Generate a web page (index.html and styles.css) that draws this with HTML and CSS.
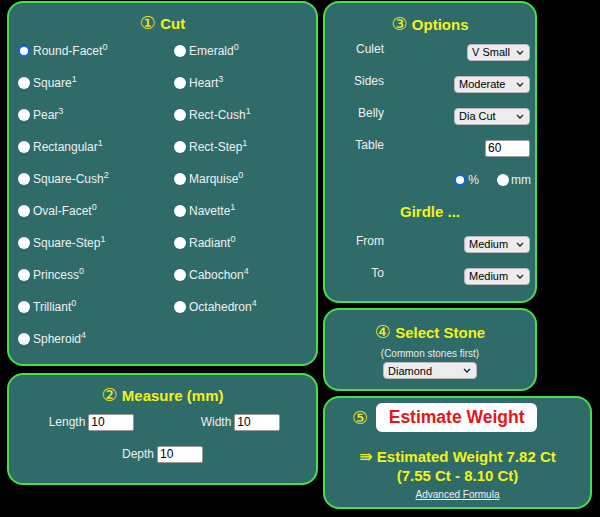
FILE: index.html
```html
<!DOCTYPE html>
<html>
<head>
<meta charset="utf-8">
<link rel="stylesheet" href="styles.css">
</head>
<body>
<div class="page">
  <div class="col-left">
    <div class="panel cut">
      <div class="title"><span class="num">①</span> Cut</div>
      <div class="cut-grid">
        <label class="opt"><input type="radio" name="cut" checked><span>Round-Facet<sup>0</sup></span></label>
        <label class="opt"><input type="radio" name="cut"><span>Emerald<sup>0</sup></span></label>
        <label class="opt"><input type="radio" name="cut"><span>Square<sup>1</sup></span></label>
        <label class="opt"><input type="radio" name="cut"><span>Heart<sup>3</sup></span></label>
        <label class="opt"><input type="radio" name="cut"><span>Pear<sup>3</sup></span></label>
        <label class="opt"><input type="radio" name="cut"><span>Rect-Cush<sup>1</sup></span></label>
        <label class="opt"><input type="radio" name="cut"><span>Rectangular<sup>1</sup></span></label>
        <label class="opt"><input type="radio" name="cut"><span>Rect-Step<sup>1</sup></span></label>
        <label class="opt"><input type="radio" name="cut"><span>Square-Cush<sup>2</sup></span></label>
        <label class="opt"><input type="radio" name="cut"><span>Marquise<sup>0</sup></span></label>
        <label class="opt"><input type="radio" name="cut"><span>Oval-Facet<sup>0</sup></span></label>
        <label class="opt"><input type="radio" name="cut"><span>Navette<sup>1</sup></span></label>
        <label class="opt"><input type="radio" name="cut"><span>Square-Step<sup>1</sup></span></label>
        <label class="opt"><input type="radio" name="cut"><span>Radiant<sup>0</sup></span></label>
        <label class="opt"><input type="radio" name="cut"><span>Princess<sup>0</sup></span></label>
        <label class="opt"><input type="radio" name="cut"><span>Cabochon<sup>4</sup></span></label>
        <label class="opt"><input type="radio" name="cut"><span>Trilliant<sup>0</sup></span></label>
        <label class="opt"><input type="radio" name="cut"><span>Octahedron<sup>4</sup></span></label>
        <label class="opt"><input type="radio" name="cut"><span>Spheroid<sup>4</sup></span></label>
      </div>
    </div>
    <div class="panel measure">
      <div class="title"><span class="num">②</span> Measure (mm)</div>
      <div class="m-row two">
        <div class="field"><span class="lbl">Length</span><input class="num-in" type="text" value="10"></div>
        <div class="field"><span class="lbl">Width</span><input class="num-in" type="text" value="10"></div>
      </div>
      <div class="m-row one">
        <div class="field"><span class="lbl">Depth</span><input class="num-in" type="text" value="10"></div>
      </div>
    </div>
  </div>
  <div class="col-right">
    <div class="panel options">
      <div class="title"><span class="num">③</span> Options</div>
      <div class="o-row">
        <span class="o-lbl">Culet</span>
        <span class="sel w63"><select><option>V Small</option></select><svg width="8" height="5" viewBox="0 0 8 5"><polyline points="1,1 4,4 7,1" fill="none" stroke="#222" stroke-width="1.3"/></svg></span>
      </div>
      <div class="o-row">
        <span class="o-lbl">Sides</span>
        <span class="sel w76"><select><option>Moderate</option></select><svg width="8" height="5" viewBox="0 0 8 5"><polyline points="1,1 4,4 7,1" fill="none" stroke="#222" stroke-width="1.3"/></svg></span>
      </div>
      <div class="o-row">
        <span class="o-lbl">Belly</span>
        <span class="sel w76"><select><option>Dia Cut</option></select><svg width="8" height="5" viewBox="0 0 8 5"><polyline points="1,1 4,4 7,1" fill="none" stroke="#222" stroke-width="1.3"/></svg></span>
      </div>
      <div class="o-row">
        <span class="o-lbl">Table</span>
        <input class="num-in table-in" type="text" value="60">
      </div>
      <div class="o-row units">
        <label class="opt"><input type="radio" name="unit" checked><span>%</span></label>
        <label class="opt"><input type="radio" name="unit"><span>mm</span></label>
      </div>
      <div class="subtitle">Girdle ...</div>
      <div class="o-row">
        <span class="o-lbl">From</span>
        <span class="sel w66"><select><option>Medium</option></select><svg width="8" height="5" viewBox="0 0 8 5"><polyline points="1,1 4,4 7,1" fill="none" stroke="#222" stroke-width="1.3"/></svg></span>
      </div>
      <div class="o-row">
        <span class="o-lbl">To</span>
        <span class="sel w66"><select><option>Medium</option></select><svg width="8" height="5" viewBox="0 0 8 5"><polyline points="1,1 4,4 7,1" fill="none" stroke="#222" stroke-width="1.3"/></svg></span>
      </div>
    </div>
    <div class="panel stone">
      <div class="title"><span class="num">④</span> Select Stone</div>
      <div class="hint">(Common stones first)</div>
      <span class="sel w94"><select><option>Diamond</option></select><svg width="8" height="5" viewBox="0 0 8 5"><polyline points="1,1 4,4 7,1" fill="none" stroke="#222" stroke-width="1.3"/></svg></span>
    </div>
    <div class="panel estimate">
      <div class="est-head">
        <span class="num big">⑤</span>
        <button class="est-btn" type="button">Estimate Weight</button>
      </div>
      <div class="result"><span class="arrow">⇛</span> Estimated Weight 7.82 Ct</div>
      <div class="result">(7.55 Ct - 8.10 Ct)</div>
      <a class="adv" href="#">Advanced Formula</a>
    </div>
  </div>
</div>
</body>
</html>
```
FILE: styles.css
```css
html, body {
  margin: 0;
  padding: 0;
  background: #000;
}
body {
  font-family: "Liberation Sans", Arial, sans-serif;
  color: #f0f0f0;
  font-size: 12px;
}
.page {
  display: flex;
  align-items: flex-start;
  gap: 5px;
  padding: 1px 0 0 7px;
}
.col-left {
  display: flex;
  flex-direction: column;
  gap: 7px;
  width: 311px;
}
.col-right {
  display: flex;
  flex-direction: column;
  align-items: flex-start;
  gap: 5px;
}
.panel {
  box-sizing: border-box;
  border: 2px solid #4cdc50;
  border-radius: 16px;
  background: #2f6b68;
}
.title {
  color: #f2f21e;
  font-weight: bold;
  font-size: 15px;
  line-height: 20px;
  text-align: center;
}
.num {
  font-family: "DejaVu Sans", sans-serif;
  font-weight: normal;
  font-size: 18px;
}
/* Cut */
.cut {
  height: 365px;
  padding-top: 10px;
}
.cut .title {
  margin-bottom: 1px;
}
.cut-grid {
  display: grid;
  grid-template-columns: 156px 1fr;
  grid-auto-rows: 32px;
  align-items: center;
  padding-left: 9px;
}
.opt {
  display: flex;
  align-items: center;
  gap: 3px;
  color: #f0f0f0;
  font-size: 12px;
  white-space: nowrap;
}
.opt input[type=radio] {
  appearance: none;
  -webkit-appearance: none;
  box-sizing: border-box;
  width: 12px;
  height: 12px;
  margin: 0;
  border-radius: 50%;
  background: #fff;
  border: none;
}
.opt input[type=radio]:checked {
  border: 2px solid #1a62e4;
  background: #fff;
}
sup {
  font-size: 9px;
  line-height: 0;
  vertical-align: 5px;
}
/* Measure */
.measure {
  height: 112px;
  padding-top: 10px;
}
.m-row {
  height: 32px;
  display: flex;
  align-items: center;
}
.m-row.two {
  display: grid;
  grid-template-columns: 149px 149px;
  padding-left: 8px;
}
.m-row.one {
  justify-content: center;
}
.field {
  display: flex;
  align-items: center;
  justify-content: center;
  gap: 3px;
}
.lbl {
  font-size: 12px;
  color: #f0f0f0;
}
.num-in {
  box-sizing: border-box;
  width: 46px;
  height: 17px;
  border: 1px solid #9a9a9a;
  border-radius: 2px;
  background: #fff;
  font-family: "Liberation Sans", Arial, sans-serif;
  font-size: 12px;
  color: #000;
  padding: 0 2px;
  margin: 0;
}
/* Options */
.options {
  width: 214px;
  height: 302px;
  padding-top: 11px;
}
.options .title {
  margin-bottom: 1px;
}
.o-row {
  height: 32px;
  display: flex;
  align-items: center;
  padding-right: 5px;
}
.o-lbl {
  width: 59px;
  text-align: right;
  font-size: 12px;
  margin-bottom: 6px;
}
.o-row .sel,
.o-row .table-in {
  margin-left: auto;
}
.table-in {
  width: 45px;
}
.units {
  justify-content: flex-end;
  gap: 18px;
  padding-right: 4px;
}
.units .opt {
  gap: 2px;
}
.subtitle {
  height: 32px;
  line-height: 32px;
  text-align: center;
  color: #f2f21e;
  font-weight: bold;
  font-size: 15px;
}
.sel {
  position: relative;
  display: inline-block;
  height: 17px;
}
.sel select {
  appearance: none;
  -webkit-appearance: none;
  box-sizing: border-box;
  width: 100%;
  height: 17px;
  margin: 0;
  padding: 0 0 0 4px;
  border: 1px solid #b9b9b9;
  border-radius: 4px;
  background: #ececec;
  font-family: "Liberation Sans", Arial, sans-serif;
  font-size: 11px;
  color: #000;
}
.sel svg {
  position: absolute;
  right: 6px;
  top: 6px;
  pointer-events: none;
}
.w63 { width: 63px; }
.w76 { width: 76px; }
.w66 { width: 66px; }
.w94 { width: 94px; }
/* Select stone */
.stone {
  width: 214px;
  height: 83px;
  padding-top: 12px;
  display: flex;
  flex-direction: column;
  align-items: center;
}
.hint {
  font-size: 10px;
  line-height: 13px;
  margin-top: 4px;
  margin-bottom: 2px;
  color: #eaeaea;
}
/* Estimate */
.estimate {
  width: 269px;
  height: 113px;
  padding-top: 5px;
  display: flex;
  flex-direction: column;
  align-items: center;
}
.est-head {
  align-self: stretch;
  display: flex;
  align-items: center;
  gap: 8px;
  padding-left: 27px;
  height: 29px;
}
.num.big {
  color: #f2f21e;
  font-size: 18px;
}
.est-btn {
  box-sizing: border-box;
  width: 161px;
  height: 29px;
  border: none;
  border-radius: 6px;
  background: #fff;
  color: #e8141a;
  font-family: "Liberation Sans", Arial, sans-serif;
  font-weight: bold;
  font-size: 17.5px;
  padding: 0;
}
.result {
  color: #f2f21e;
  font-weight: bold;
  font-size: 15px;
  line-height: 19px;
}
.arrow {
  font-family: "DejaVu Sans", sans-serif;
  font-weight: bold;
  font-size: 16px;
  line-height: 0;
}
.est-head + .result {
  margin-top: 15px;
}
.adv {
  margin-top: 3px;
  font-size: 10px;
  line-height: 13px;
  color: #f0f0f0;
  text-decoration: underline;
}
```
